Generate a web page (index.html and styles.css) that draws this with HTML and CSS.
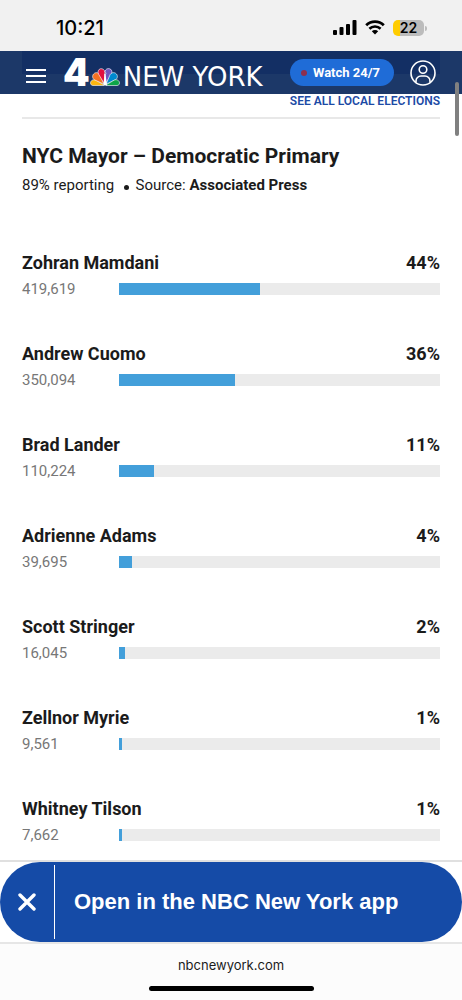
FILE: index.html
```html
<!DOCTYPE html>
<html lang="en">
<head>
	<title>NYC Mayor – Democratic Primary</title>
	<meta charset="utf-8">
	<meta name="viewport" content="width=device-width, initial-scale=1">

	<link rel="stylesheet" href="styles.css">
</head>
<body>

	<div class="status-bar">
		<span class="status-time">10:21</span>
		<div class="status-icons">
			<svg class="icon-signal" width="24" height="16" viewBox="0 0 24 16" aria-hidden="true">
				<rect x="0" y="10" width="4" height="5" rx="1"/>
				<rect x="6.500" y="7" width="4" height="8" rx="1"/>
				<rect x="13" y="4" width="4" height="11" rx="1"/>
				<rect x="19.500" y="0" width="4" height="15" rx="1"/>
			</svg>
			<svg class="icon-wifi" width="20" height="15" viewBox="0 0 20 15" aria-hidden="true">
				<path d="M1.2 5.2a12.6 12.6 0 0 1 17.6 0" fill="none" stroke="#000" stroke-width="2.8"/>
				<path d="M4.4 8.8a8 8 0 0 1 11.2 0" fill="none" stroke="#000" stroke-width="2.6"/>
				<path d="M10 14.6l-3.2-3.3a4.6 4.6 0 0 1 6.4 0z"/>
			</svg>
			<span class="battery">22</span>
		</div>
	</div>

	<header class="site-header">
		<button class="btn-menu" aria-label="Menu">
			<svg width="20" height="14" viewBox="0 0 20 14" fill="#ffffff">
				<path d="M0 0h20v2H0zM0 6h20v2H0zM0 12h20v2H0z"/>
			</svg>
		</button>
		<a class="logo" href="#">
			<span class="logo-number">4</span>
			<svg class="logo-peacock" width="30" height="18" viewBox="0 0 30 18" aria-hidden="true">
				<g stroke="#ffffff" stroke-width=".6">
					<path d="M14 17L6 12.200C3.500 10.800 .5 12.500 .5 15c0 1.500 1 2.500 2.500 2.500h10.500z" fill="#fcb711"/>
					<path d="M13.800 16L10.200 7.200C9 4.300 5.500 3.800 3.600 6c-1.800 2.200-1 4.700 1.200 6z" fill="#f37021"/>
					<path d="M14.200 15.500L14.800 4.500C15 1.800 12.500 .2 10.300 .8 8 1.500 7.600 4 8.500 6z" fill="#e0103f"/>
					<path d="M15.800 15.500L14.900 6l1.200-.5-1-1.800C15.300 1 17.700 .2 19.700 .8c2.300 .7 2.700 3.200 1.800 5.200z" fill="#6f55c0"/>
					<path d="M16.200 16L19.800 7.200C21 4.300 24.500 3.800 26.400 6c1.800 2.200 1 4.700-1.200 6z" fill="#0089d0"/>
					<path d="M16 17l8-4.800c2.500-1.400 5.500 .3 5.500 2.800 0 1.500-1 2.500-2.500 2.500H16.500z" fill="#0da548"/>
				</g>
				<path d="M14.500 6h1L17 17.500h-3.500z" fill="#ffffff"/>
			</svg>
			<span class="logo-city">NEW YORK</span>
		</a>
		<button class="btn-watch">Watch 24/7</button>
		<button class="btn-account" aria-label="Account">
			<svg width="26" height="26" viewBox="0 0 26 26" fill="none" stroke="#ffffff" stroke-width="1.600">
				<circle cx="13" cy="13" r="12"/>
				<circle cx="13" cy="9.500" r="3.800"/>
				<path d="M6 22.500v-1.500a5 5 0 0 1 5-5h4a5 5 0 0 1 5 5v1.500"/>
			</svg>
		</button>
		<div class="scroll-thumb"></div>
	</header>

	<main class="results">
		<a class="all-elections" href="#">SEE ALL LOCAL ELECTIONS</a>

		<h1>NYC Mayor – Democratic Primary</h1>
		<p class="source">89% reporting <span class="dot"></span> Source: <strong>Associated Press</strong></p>

		<ul class="candidates">
			<li>
				<div class="candidate"><span>Zohran Mamdani</span><span>44%</span></div>
				<div class="votes"><span>419,619</span><div class="bar"><div class="bar-fill" style="width: 44%"></div></div></div>
			</li>
			<li>
				<div class="candidate"><span>Andrew Cuomo</span><span>36%</span></div>
				<div class="votes"><span>350,094</span><div class="bar"><div class="bar-fill" style="width: 36%"></div></div></div>
			</li>
			<li>
				<div class="candidate"><span>Brad Lander</span><span>11%</span></div>
				<div class="votes"><span>110,224</span><div class="bar"><div class="bar-fill" style="width: 11%"></div></div></div>
			</li>
			<li>
				<div class="candidate"><span>Adrienne Adams</span><span>4%</span></div>
				<div class="votes"><span>39,695</span><div class="bar"><div class="bar-fill" style="width: 4%"></div></div></div>
			</li>
			<li>
				<div class="candidate"><span>Scott Stringer</span><span>2%</span></div>
				<div class="votes"><span>16,045</span><div class="bar"><div class="bar-fill" style="width: 2%"></div></div></div>
			</li>
			<li>
				<div class="candidate"><span>Zellnor Myrie</span><span>1%</span></div>
				<div class="votes"><span>9,561</span><div class="bar"><div class="bar-fill" style="width: 1%"></div></div></div>
			</li>
			<li>
				<div class="candidate"><span>Whitney Tilson</span><span>1%</span></div>
				<div class="votes"><span>7,662</span><div class="bar"><div class="bar-fill" style="width: 1%"></div></div></div>
			</li>
		</ul>
	</main>

	<div class="app-banner">
		<div class="app-banner-pill">
			<button class="btn-close" aria-label="Close">
				<svg width="18" height="18" viewBox="0 0 18 18" stroke="#ffffff" stroke-width="3.400" stroke-linecap="round">
					<path d="M2 2l14 14M16 2L2 16"/>
				</svg>
			</button>
			<a class="app-link" href="#">Open in the NBC New York app</a>
		</div>
	</div>

	<footer class="browser-bar">
		<span>nbcnewyork.com</span>
		<div class="home-indicator"></div>
	</footer>

</body>
</html>
```
FILE: styles.css
```css
*,
*:before,
*:after {
	box-sizing: border-box;
}

body {
	background-color: #ffffff;
	color: #1b1b1b;
	display: flex;
	flex-direction: column;
	font-family: Roboto, "Liberation Sans", sans-serif;
	margin: 0;
	min-height: 100vh;
}

button {
	background: none;
	border: 0;
	color: inherit;
	font-family: inherit;
	padding: 0;
}

a {
	color: inherit;
	text-decoration: none;
}

svg {
	display: block;
}

/**
 * Phone status bar
 */
.status-bar {
	align-items: center;
	background-color: #f1f1f1;
	color: #000000;
	display: flex;
	font-family: Inter, sans-serif;
	height: 51px;
	justify-content: space-between;
	padding: 4px 36px 0 56px;
}

.status-time {
	font-size: 20px;
	font-weight: 500;
}

.status-icons {
	align-items: center;
	display: flex;
	gap: 8px;
}

.battery {
	background: linear-gradient(to right, #ffcc00 7px, #bcbcbc 7px);
	border-radius: 5px;
	font-size: 14px;
	font-weight: 600;
	line-height: 16px;
	margin-right: 2px;
	position: relative;
	text-align: center;
	width: 31px;
}

.battery:after {
	background-color: #bcbcbc;
	border-radius: 0 2px 2px 0;
	content: "";
	height: 5px;
	position: absolute;
	right: -3px;
	top: 6px;
	width: 2px;
}

/**
 * Site header
 */
.site-header {
	align-items: center;
	background: linear-gradient(#132f64, #132f64) 22px 0 / calc(100% - 44px) 23px no-repeat #1c3868;
	color: #ffffff;
	display: flex;
	height: 43px;
	padding: 0 26px;
	position: relative;
}

.btn-menu {
	padding-top: 6px;
}

.logo {
	align-items: baseline;
	display: flex;
	margin-left: 17px;
	padding-top: 3px;
}

.logo-number {
	font-family: Inter, sans-serif;
	font-size: 38px;
	font-weight: 900;
	line-height: 40px;
}

.logo-city {
	font-family: "DejaVu Sans", sans-serif;
	font-size: 26px;
	line-height: 40px;
	margin-left: 3px;
	white-space: nowrap;
}

.btn-watch {
	align-items: center;
	background-color: #1f6cd7;
	border-radius: 14px;
	display: flex;
	font-size: 13px;
	font-weight: 700;
	gap: 6px;
	height: 27px;
	margin-left: auto;
	padding: 0 14px 0 11px;
	white-space: nowrap;
}

.btn-watch:before {
	background-color: #8e2f4f;
	border-radius: 50%;
	content: "";
	height: 6px;
	width: 6px;
}

.btn-account {
	margin-left: 16px;
}

.scroll-thumb {
	background-color: #808080;
	border-radius: 2px;
	height: 54px;
	position: absolute;
	right: 3px;
	top: 31px;
	width: 4px;
}

/**
 * Election results
 */
.results {
	flex: 1;
	padding: 0 22px 14px;
}

.all-elections {
	border-bottom: 2px solid #e8e8e8;
	color: #1c4aa5;
	display: block;
	font-size: 12px;
	font-weight: 600;
	line-height: 14px;
	padding-bottom: 9px;
	text-align: right;
}

h1 {
	font-size: 21px;
	line-height: 26px;
	margin: 24px 0 6px;
}

.source {
	font-size: 15px;
	line-height: 20px;
	margin: 0 0 56px;
}

.dot {
	background-color: #1b1b1b;
	border-radius: 50%;
	display: inline-block;
	height: 5px;
	margin: 0 3px 0 6px;
	width: 5px;
}

.candidates {
	display: flex;
	flex-direction: column;
	gap: 43px;
	list-style: none;
	margin: 0;
	padding: 0;
}

.candidate {
	display: flex;
	font-size: 18px;
	font-weight: 700;
	justify-content: space-between;
	line-height: 24px;
	margin-bottom: 4px;
}

.votes {
	align-items: center;
	color: #777777;
	display: grid;
	font-size: 15px;
	grid-template-columns: 97px 1fr;
	line-height: 20px;
}

.bar {
	background-color: #ebebeb;
	height: 12px;
}

.bar-fill {
	background-color: #439fda;
	height: 100%;
}

/**
 * App banner
 */
.app-banner {
	border-bottom: 2px solid #e6e6e6;
	border-top: 2px solid #e0e0e0;
}

.app-banner-pill {
	align-items: center;
	background-color: #154ba7;
	border-radius: 40px;
	color: #ffffff;
	display: flex;
	height: 80px;
	padding: 3px 0;
}

.btn-close {
	align-items: center;
	border-right: 1px solid #ffffff;
	display: flex;
	height: 100%;
	justify-content: center;
	width: 55px;
}

.app-link {
	flex: 1;
	font-family: "Liberation Sans", Arial, sans-serif;
	font-size: 22px;
	font-weight: 700;
	padding-left: 19px;
}

/**
 * Browser address bar
 */
.browser-bar {
	align-items: center;
	background-color: #fcfcfc;
	color: #1b1b1b;
	display: flex;
	flex-direction: column;
	font-family: Inter, sans-serif;
	font-size: 13px;
	gap: 13px;
	line-height: 16px;
	padding: 13px 0 9px;
}

.home-indicator {
	background-color: #000000;
	border-radius: 3px;
	height: 5px;
	width: 165px;
}
```
